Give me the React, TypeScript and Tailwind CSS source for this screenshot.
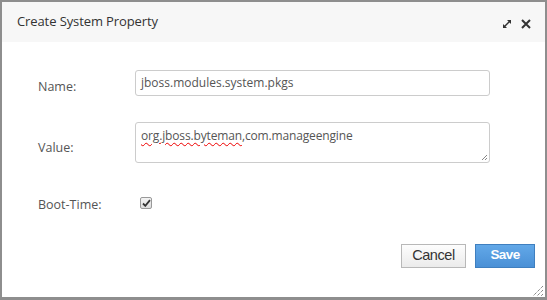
import React from "react"

function ExpandIcon() {
  return (
    <svg width="10" height="10" viewBox="0 0 10 10" className="text-[#333]">
      <line x1="2.5" y1="7.5" x2="7.5" y2="2.5" stroke="currentColor" strokeWidth="1.4" />
      <polygon points="5,1 9,1 9,5" fill="currentColor" />
      <polygon points="1,5 1,9 5,9" fill="currentColor" />
    </svg>
  )
}

function CloseIcon() {
  return (
    <svg width="10" height="10" viewBox="0 0 10 10" className="text-[#333]">
      <path d="M1 1 L9 9 M9 1 L1 9" stroke="currentColor" strokeWidth="2" />
    </svg>
  )
}

function Grip() {
  return (
    <svg width="12" height="12" viewBox="0 0 12 12" className="text-[#555]">
      <path d="M11 1 L1 11 M11 5 L5 11 M11 9 L9 11" stroke="currentColor" strokeWidth="1" strokeDasharray="1 1" />
    </svg>
  )
}

export default function App() {
  return (
    <div className="w-[547px] h-[300px] bg-[#8e8e8e] pt-[2px] pl-[2px] pr-[2px] pb-[3px] overflow-hidden font-['Open_Sans',sans-serif]">
      <div className="relative w-full h-full bg-white flex flex-col">
        <div className="h-[40px] bg-[#f7f7f7] flex items-center justify-between pl-[15px] pr-[14px]">
          <h2 className="text-[13px] tracking-[-0.1px] text-[#333] font-normal pb-[1px]">Create System Property</h2>
          <div className="flex items-center gap-[9px] pt-[3px]">
            <ExpandIcon />
            <CloseIcon />
          </div>
        </div>

        <div className="flex flex-col pl-[36px] pt-[28px] text-[12.5px] text-[#555]">
          <div className="flex items-center">
            <label className="w-[97px] pt-[8px]">Name:</label>
            <div className="w-[355px] h-[26px] border border-[#ccc] rounded-[3px] px-[5px] flex items-center text-[12px] text-[#555]">
              jboss.modules.system.pkgs
            </div>
          </div>

          <div className="flex items-center mt-[25px]">
            <label className="w-[97px] pt-[13px]">Value:</label>
            <div className="relative w-[355px] h-[41px] border border-[#ccc] rounded-[3px] px-[5px] pt-[4px] text-[12px] tracking-[-0.15px]">
              <span className="underline decoration-wavy decoration-[#e00] decoration-1 underline-offset-2">org.jboss.byteman</span>
              <span>,com.manageengine</span>
              <span className="absolute right-[1px] bottom-[1px] leading-none">
                <svg width="7" height="7" viewBox="0 0 7 7" className="text-[#888]">
                  <path d="M6 1 L1 6 M6 4 L4 6" stroke="currentColor" strokeWidth="1" />
                </svg>
              </span>
            </div>
          </div>

          <div className="flex items-center mt-[33px]">
            <label className="w-[102px]">Boot-Time:</label>
            <div className="w-[12px] h-[12px] border border-[#999] rounded-[2px] bg-gradient-to-b from-[#f4f4f4] to-[#dcdcdc] flex items-center justify-center mb-[4px]">
              <svg width="9" height="8" viewBox="0 0 9 8">
                <path d="M1 4.5 L3.3 6.8 L8 1.2" stroke="#333" strokeWidth="1.8" fill="none" />
              </svg>
            </div>
          </div>
        </div>

        <div className="flex justify-end gap-[9px] pr-[10px] mt-[29px] font-['Liberation_Sans',Arial,sans-serif]">
          <button className="w-[65px] h-[24px] border border-[#b8b8b8] bg-gradient-to-b from-[#fdfdfd] to-[#ebebeb] text-[#333] text-[14.5px] tracking-[-0.4px] flex items-center justify-center">
            Cancel
          </button>
          <button className="w-[60px] h-[24px] border border-[#3f7fbf] bg-gradient-to-b from-[#62a8e8] to-[#4a90d6] text-white text-[13.5px] tracking-[-0.6px] font-bold flex items-center justify-center">
            Save
          </button>
        </div>

        <div className="absolute right-[1px] bottom-[0px] leading-none">
          <Grip />
        </div>
      </div>
    </div>
  )
}
